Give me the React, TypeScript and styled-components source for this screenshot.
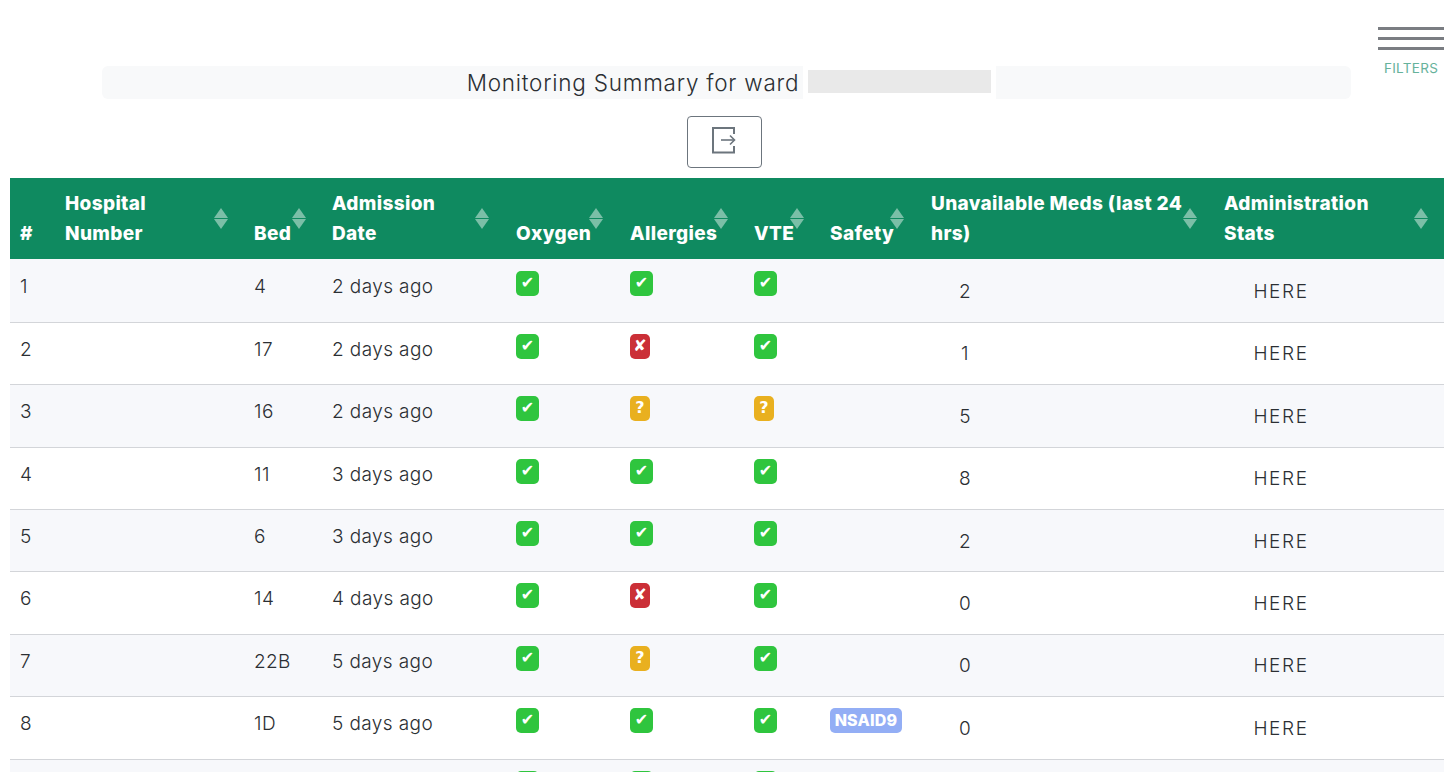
import React from "react"
import styled, { createGlobalStyle } from "styled-components"

type Status = "ok" | "no" | "unknown"

interface Patient {
   num: number
   bed: string
   admitted: string
   oxygen: Status
   allergies: Status
   vte: Status
   safety?: string
   meds: string
}

const patients: Patient[] = [
   { num: 1, bed: "4", admitted: "2 days ago", oxygen: "ok", allergies: "ok", vte: "ok", meds: "2" },
   { num: 2, bed: "17", admitted: "2 days ago", oxygen: "ok", allergies: "no", vte: "ok", meds: "1" },
   { num: 3, bed: "16", admitted: "2 days ago", oxygen: "ok", allergies: "unknown", vte: "unknown", meds: "5" },
   { num: 4, bed: "11", admitted: "3 days ago", oxygen: "ok", allergies: "ok", vte: "ok", meds: "8" },
   { num: 5, bed: "6", admitted: "3 days ago", oxygen: "ok", allergies: "ok", vte: "ok", meds: "2" },
   { num: 6, bed: "14", admitted: "4 days ago", oxygen: "ok", allergies: "no", vte: "ok", meds: "0" },
   { num: 7, bed: "22B", admitted: "5 days ago", oxygen: "ok", allergies: "unknown", vte: "ok", meds: "0" },
   { num: 8, bed: "1D", admitted: "5 days ago", oxygen: "ok", allergies: "ok", vte: "ok", safety: "NSAID9", meds: "0" },
]

const columns = [
   { label: "#", width: 45, sortRight: null },
   { label: "Hospital\nNumber", width: 189, sortRight: 16 },
   { label: "Bed", width: 78, sortRight: 16 },
   { label: "Admission\nDate", width: 184, sortRight: 17 },
   { label: "Oxygen", width: 114, sortRight: 17 },
   { label: "Allergies", width: 124, sortRight: 16 },
   { label: "VTE", width: 76, sortRight: 16 },
   { label: "Safety", width: 101, sortRight: 17 },
   { label: "Unavailable Meds (last 24\nhrs)", width: 293, sortRight: 17 },
   { label: "Administration\nStats", width: 230, sortRight: 16 },
]

const glyphs: Record<Status, string> = { ok: "✔", no: "✘", unknown: "?" }

const StatusBadge = ({ status }: { status: Status }) => <Badge $status={status}>{glyphs[status]}</Badge>

const SortArrows = ({ right }: { right: number }) => (
   <SortIcon $right={right} width="14" height="21" viewBox="0 0 14 21">
      <path d="M7 0L14 10H0Z" fill="#fff" fillOpacity="0.45" />
      <path d="M7 21L14 11H0Z" fill="#fff" fillOpacity="0.45" />
   </SortIcon>
)

const App = () => {
   return (
      <Page>
         <GlobalStyle />
         <TopRow>
            <TitleBar>
               <Title>Monitoring Summary for ward</Title>
               <WardField>
                  <WardRedacted />
               </WardField>
            </TitleBar>
            <FilterToggle>
               <FilterLines>
                  <FilterLine />
                  <FilterLine />
                  <FilterLine />
               </FilterLines>
               <FilterLabel>FILTERS</FilterLabel>
            </FilterToggle>
         </TopRow>
         <ActionRow>
            <ExportButton aria-label="Export">
               <svg width="24" height="27" viewBox="0 0 24 27" fill="none" stroke="#6c757d" strokeWidth="2">
                  <path d="M22 7V1H1V25.5H22V19" />
                  <path d="M9 13H22" strokeWidth="1.6" />
                  <path d="M18 8.5L22.5 13L18 17.5" strokeWidth="1.6" />
               </svg>
            </ExportButton>
         </ActionRow>
         <Table>
            <colgroup>
               {columns.map(c => (
                  <col key={c.label} style={{ width: c.width }} />
               ))}
            </colgroup>
            <thead>
               <tr>
                  {columns.map(c => (
                     <HeadCell key={c.label}>
                        {c.label}
                        {c.sortRight !== null && <SortArrows right={c.sortRight} />}
                     </HeadCell>
                  ))}
               </tr>
            </thead>
            <tbody>
               {patients.map(p => (
                  <Row key={p.num}>
                     <Cell>{p.num}</Cell>
                     <Cell />
                     <Cell>{p.bed}</Cell>
                     <Cell>{p.admitted}</Cell>
                     <Cell><StatusBadge status={p.oxygen} /></Cell>
                     <Cell><StatusBadge status={p.allergies} /></Cell>
                     <Cell><StatusBadge status={p.vte} /></Cell>
                     <Cell>{p.safety && <SafetyBadge>{p.safety}</SafetyBadge>}</Cell>
                     <CentredCell $padRight={215}>{p.meds}</CentredCell>
                     <LinkCell $padRight={106}>HERE</LinkCell>
                  </Row>
               ))}
               <Row>
                  <Cell />
                  <Cell />
                  <Cell />
                  <Cell />
                  <Cell><Badge $status="ok" /></Cell>
                  <Cell><Badge $status="ok" /></Cell>
                  <Cell><Badge $status="ok" /></Cell>
                  <Cell />
                  <Cell />
                  <Cell />
               </Row>
            </tbody>
         </Table>
      </Page>
   )
}

export default App

// Styled Components

const GlobalStyle = createGlobalStyle`
   html, body {
      margin: 0;
      padding: 0;
      background: #fff;
      overflow: hidden;
   }
   body {
      font-family: "Inter", "Liberation Sans", sans-serif;
      color: #212529;
   }
`

const Page = styled.div`
   width: 1456px;
   height: 772px;
   overflow: hidden;
   padding: 28px 12px 0 10px;
   box-sizing: border-box;
`

const TopRow = styled.div`
   display: flex;
   align-items: flex-start;
   height: 71px;
   padding-left: 92px;
`

const TitleBar = styled.div`
   width: 1249px;
   height: 33px;
   margin-top: 38px;
   padding-left: 10px;
   box-sizing: border-box;
   display: flex;
   justify-content: center;
   align-items: center;
   gap: 4px;
   border-radius: 6px;
   background: #f8f9fa;
`

const Title = styled.span`
   font-size: 22.5px;
   font-weight: 300;
   letter-spacing: 0.77px;
   color: #2b2f33;
`

const WardField = styled.div`
   width: 183px;
   height: 23px;
   padding: 4px 5px 6px;
   background: #fff;
`

const WardRedacted = styled.div`
   width: 100%;
   height: 100%;
   background: #e9e9e9;
`

const FilterToggle = styled.div`
   width: 66px;
   margin-top: -1px;
   margin-left: 27px;
   display: flex;
   flex-direction: column;
   align-items: center;
`

const FilterLines = styled.div`
   width: 100%;
   display: flex;
   flex-direction: column;
   gap: 7px;
`

const FilterLine = styled.div`
   height: 3px;
   background: #7a7d82;
`

const FilterLabel = styled.div`
   margin-top: 10px;
   font-size: 13.5px;
   font-weight: 400;
   letter-spacing: 0.3px;
   color: #66b29b;
`

const ActionRow = styled.div`
   display: flex;
   justify-content: center;
   padding: 17px 6px 10px 0;
`

const ExportButton = styled.button`
   width: 75px;
   height: 52px;
   padding: 0 0 3px;
   display: flex;
   align-items: center;
   justify-content: center;
   background: #fff;
   border: 1px solid #6c757d;
   border-radius: 4px;
`

const Table = styled.table`
   width: 1434px;
   table-layout: fixed;
   border-collapse: collapse;
`

const HeadCell = styled.th`
   position: relative;
   height: 81px;
   padding: 10px;
   box-sizing: border-box;
   vertical-align: bottom;
   text-align: left;
   white-space: pre-line;
   font-size: 19px;
   font-weight: 800;
   letter-spacing: 0.35px;
   line-height: 30px;
   color: #fff;
   background: #0f8a60;
`

const SortIcon = styled.svg<{ $right: number }>`
   position: absolute;
   top: 30px;
   right: ${({ $right }) => $right}px;
`

const Row = styled.tr`
   height: 62.4px;
   border-bottom: 1px solid #d3d5d9;
   &:nth-child(odd) {
      background: #f7f8fb;
   }
   &:first-child {
      height: 63.4px;
      --first-row-shift: 1px;
   }
`

const Cell = styled.td`
   padding: calc(12px + var(--first-row-shift, 0px)) 10px 0;
   box-sizing: border-box;
   vertical-align: top;
   font-size: 19px;
   font-weight: 300;
   letter-spacing: 0.4px;
   line-height: 29px;
   color: #2b2f33;
`

const CentredCell = styled(Cell)<{ $padRight: number }>`
   padding-top: calc(16.5px + var(--first-row-shift, 0px));
   padding-right: ${({ $padRight }) => $padRight}px;
   text-align: center;
`

const LinkCell = styled(CentredCell)`
   letter-spacing: 1.6px;
`

const badgeColors: Record<Status, string> = { ok: "#2fc53e", no: "#cb2f37", unknown: "#e9b01f" }

const Badge = styled.span<{ $status: Status }>`
   display: block;
   box-sizing: border-box;
   width: ${({ $status }) => ($status === "ok" ? 23 : 20)}px;
   height: 25px;
   margin-top: -1px;
   border-radius: 5px;
   text-align: center;
   font-family: "DejaVu Sans", sans-serif;
   font-size: 16px;
   font-weight: 700;
   letter-spacing: 0;
   line-height: 24px;
   color: #fff;
   background: ${({ $status }) => badgeColors[$status]};
`

const SafetyBadge = styled.span`
   display: block;
   height: 25px;
   width: 72px;
   margin-top: -1px;
   box-sizing: border-box;
   border-radius: 5px;
   text-align: center;
   font-size: 16px;
   font-weight: 800;
   letter-spacing: 0.2px;
   line-height: 25px;
   color: #fff;
   background: #93aef5;
`
